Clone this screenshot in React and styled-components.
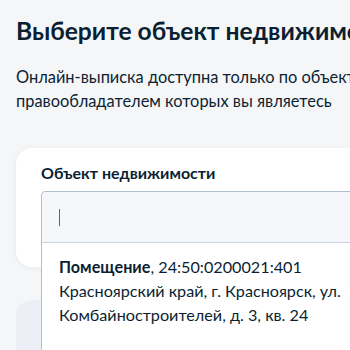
import React from "react";
import styled, { createGlobalStyle } from "styled-components";

const Global = createGlobalStyle`
  html, body {
    margin: 0;
    padding: 0;
    background: #f5f6f8;
    overflow: hidden;
  }
  body {
    font-family: Lato, "Noto Sans", sans-serif;
    color: #0b1f33;
  }
`;

const Page = styled.div`
  width: 620px;
  padding: 15px 16px 0;
  display: flex;
  flex-direction: column;
`;

const Title = styled.h1`
  margin: 0;
  font-size: 24.6px;
  line-height: 32px;
  font-weight: 700;
  white-space: nowrap;
  color: #0b1f33;
`;

const Lead = styled.p`
  margin: 18px 0 0;
  max-width: 440px;
  font-size: 16.4px;
  line-height: 24px;
  color: #0b1f33;
`;

const Card = styled.section`
  margin-top: 35px;
  background: #ffffff;
  border-radius: 16px;
  box-shadow: 0 1px 6px rgba(11, 31, 51, 0.06);
  padding: 13px 24px 24px;
  display: flex;
  flex-direction: column;
`;

const Label = styled.label`
  font-size: 16px;
  line-height: 24px;
  font-weight: 700;
  color: #0b1f33;
  margin-left: 1px;
`;

const Field = styled.div`
  position: relative;
  margin-top: 6px;
  margin-left: 1px;
`;

const Input = styled.div`
  height: 50px;
  box-sizing: content-box;
  border: 1px solid #b1bfd6;
  border-radius: 4px 4px 0 0;
  background: #f5f7fa;
  display: flex;
  align-items: center;
  padding: 0 17px;
`;

const Caret = styled.span`
  width: 1px;
  height: 17px;
  background: #5c6874;
`;

const Dropdown = styled.ul`
  position: absolute;
  left: 0;
  right: 0;
  top: 51px;
  margin: 0;
  padding: 12px 0 40px;
  list-style: none;
  background: #ffffff;
  border: 1px solid #b1bfd6;
  border-top: 1px solid #c7d1e1;
  z-index: 2;
`;

const Option = styled.li`
  padding: 0 17px;
  font-size: 16.2px;
  line-height: 24px;
  color: #0b1f33;
  max-width: 330px;
`;

const Kind = styled.b`
  font-weight: 700;
`;

const NextCard = styled.div`
  margin-top: 33px;
  height: 120px;
  border-radius: 16px;
  background: #eceff5;
`;

export default function App() {
  return (
    <>
      <Global />
      <Page>
        <Title>Выберите объект недвижимости</Title>
        <Lead>
          Онлайн-выписка доступна только по объектам, правообладателем которых
          вы являетесь
        </Lead>
        <Card>
          <Label>Объект недвижимости</Label>
          <Field>
            <Input>
              <Caret />
            </Input>
            <Dropdown>
              <Option>
                <Kind>Помещение</Kind>, 24:50:0200021:401 Красноярский край, г.
                Красноярск, ул. Комбайностроителей, д. 3, кв. 24
              </Option>
            </Dropdown>
          </Field>
        </Card>
        <NextCard />
      </Page>
    </>
  );
}
